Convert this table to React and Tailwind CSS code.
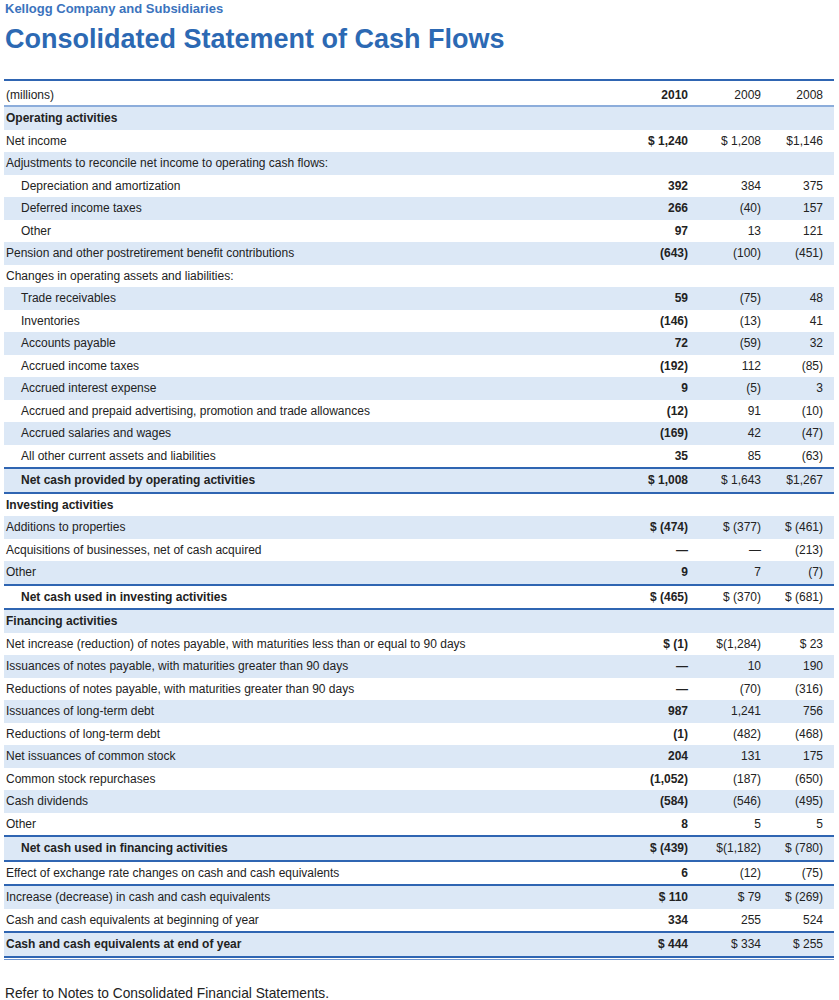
import React from 'react'

// label, values [2010, 2009, 2008], flags
const rows = [
  { label: 'Operating activities', v: ['', '', ''], strong: true },
  { label: 'Net income', v: ['$ 1,240', '$ 1,208', '$1,146'] },
  { label: 'Adjustments to reconcile net income to operating cash flows:', v: ['', '', ''] },
  { label: 'Depreciation and amortization', v: ['392', '384', '375'], indent: true },
  { label: 'Deferred income taxes', v: ['266', '(40)', '157'], indent: true },
  { label: 'Other', v: ['97', '13', '121'], indent: true },
  { label: 'Pension and other postretirement benefit contributions', v: ['(643)', '(100)', '(451)'] },
  { label: 'Changes in operating assets and liabilities:', v: ['', '', ''] },
  { label: 'Trade receivables', v: ['59', '(75)', '48'], indent: true },
  { label: 'Inventories', v: ['(146)', '(13)', '41'], indent: true },
  { label: 'Accounts payable', v: ['72', '(59)', '32'], indent: true },
  { label: 'Accrued income taxes', v: ['(192)', '112', '(85)'], indent: true },
  { label: 'Accrued interest expense', v: ['9', '(5)', '3'], indent: true },
  { label: 'Accrued and prepaid advertising, promotion and trade allowances', v: ['(12)', '91', '(10)'], indent: true },
  { label: 'Accrued salaries and wages', v: ['(169)', '42', '(47)'], indent: true },
  { label: 'All other current assets and liabilities', v: ['35', '85', '(63)'], indent: true, line: true },
  { label: 'Net cash provided by operating activities', v: ['$ 1,008', '$ 1,643', '$1,267'], indent: true, strong: true, line: true },
  { label: 'Investing activities', v: ['', '', ''], strong: true },
  { label: 'Additions to properties', v: ['$ (474)', '$ (377)', '$ (461)'] },
  { label: 'Acquisitions of businesses, net of cash acquired', v: ['—', '—', '(213)'] },
  { label: 'Other', v: ['9', '7', '(7)'], line: true },
  { label: 'Net cash used in investing activities', v: ['$ (465)', '$ (370)', '$ (681)'], indent: true, strong: true, line: true },
  { label: 'Financing activities', v: ['', '', ''], strong: true },
  { label: 'Net increase (reduction) of notes payable, with maturities less than or equal to 90 days', v: ['$ (1)', '$(1,284)', '$ 23'] },
  { label: 'Issuances of notes payable, with maturities greater than 90 days', v: ['—', '10', '190'] },
  { label: 'Reductions of notes payable, with maturities greater than 90 days', v: ['—', '(70)', '(316)'] },
  { label: 'Issuances of long-term debt', v: ['987', '1,241', '756'] },
  { label: 'Reductions of long-term debt', v: ['(1)', '(482)', '(468)'] },
  { label: 'Net issuances of common stock', v: ['204', '131', '175'] },
  { label: 'Common stock repurchases', v: ['(1,052)', '(187)', '(650)'] },
  { label: 'Cash dividends', v: ['(584)', '(546)', '(495)'] },
  { label: 'Other', v: ['8', '5', '5'], line: true },
  { label: 'Net cash used in financing activities', v: ['$ (439)', '$(1,182)', '$ (780)'], indent: true, strong: true, line: true },
  { label: 'Effect of exchange rate changes on cash and cash equivalents', v: ['6', '(12)', '(75)'], line: true },
  { label: 'Increase (decrease) in cash and cash equivalents', v: ['$ 110', '$ 79', '$ (269)'] },
  { label: 'Cash and cash equivalents at beginning of year', v: ['334', '255', '524'], line: true },
  { label: 'Cash and cash equivalents at end of year', v: ['$ 444', '$ 334', '$ 255'], strong: true },
]

function Row({ row, shaded }) {
  return (
    <div
      className={`grid grid-cols-[1fr_73px_73px_73px] items-center h-[22.5px] ${
        shaded ? 'bg-[#dce8f6]' : 'bg-white'
      }`}
    >
      <div className={`truncate ${row.indent ? 'pl-[17px]' : 'pl-[2px]'} ${row.strong ? 'font-bold' : ''}`}>
        {row.label}
      </div>
      <div className="text-right font-bold">{row.v[0]}</div>
      <div className="text-right">{row.v[1]}</div>
      <div className="text-right pr-[11px]">{row.v[2]}</div>
    </div>
  )
}

export default function App() {
  return (
    <div className="w-[839px] min-h-[1000px] bg-white text-[#222] font-['Liberation_Sans',Arial,sans-serif]">
      {/* Heading */}
      <div className="px-[5px]">
        <div className="text-[13px] leading-[17px] font-bold text-[#3b73bd]">
          Kellogg Company and Subsidiaries
        </div>
        <h1 className="mt-[6px] text-[27px] leading-[32px] font-bold text-[#2c69b3]">
          Consolidated Statement of Cash Flows
        </h1>
      </div>

      {/* Table */}
      <div className="mt-[24px] ml-[4px] mr-[5px] text-[12px]">
        <div className="h-[2px] bg-[#2f65b2]" />
        <div className="grid grid-cols-[1fr_73px_73px_73px] items-center h-[24px] pt-[3px]">
          <div className="pl-[2px]">(millions)</div>
          <div className="text-right font-bold">2010</div>
          <div className="text-right">2009</div>
          <div className="text-right pr-[11px]">2008</div>
        </div>
        <div className="h-[2px] bg-[#8caddb]" />

        {rows.map((row, i) => (
          <React.Fragment key={i}>
            <Row row={row} shaded={i % 2 === 0} />
            {row.line && <div className="h-[2px] bg-[#2f65b2]" />}
          </React.Fragment>
        ))}
        <div className="h-[2px] bg-[#2f65b2]" />
        <div className="h-[1px] bg-white" />
        <div className="h-[1px] bg-[#6f95cf]" />
      </div>

      <p className="mt-[24px] px-[5px] text-[13.75px] leading-[20px] text-[#222]">
        Refer to Notes to Consolidated Financial Statements.
      </p>
    </div>
  )
}
